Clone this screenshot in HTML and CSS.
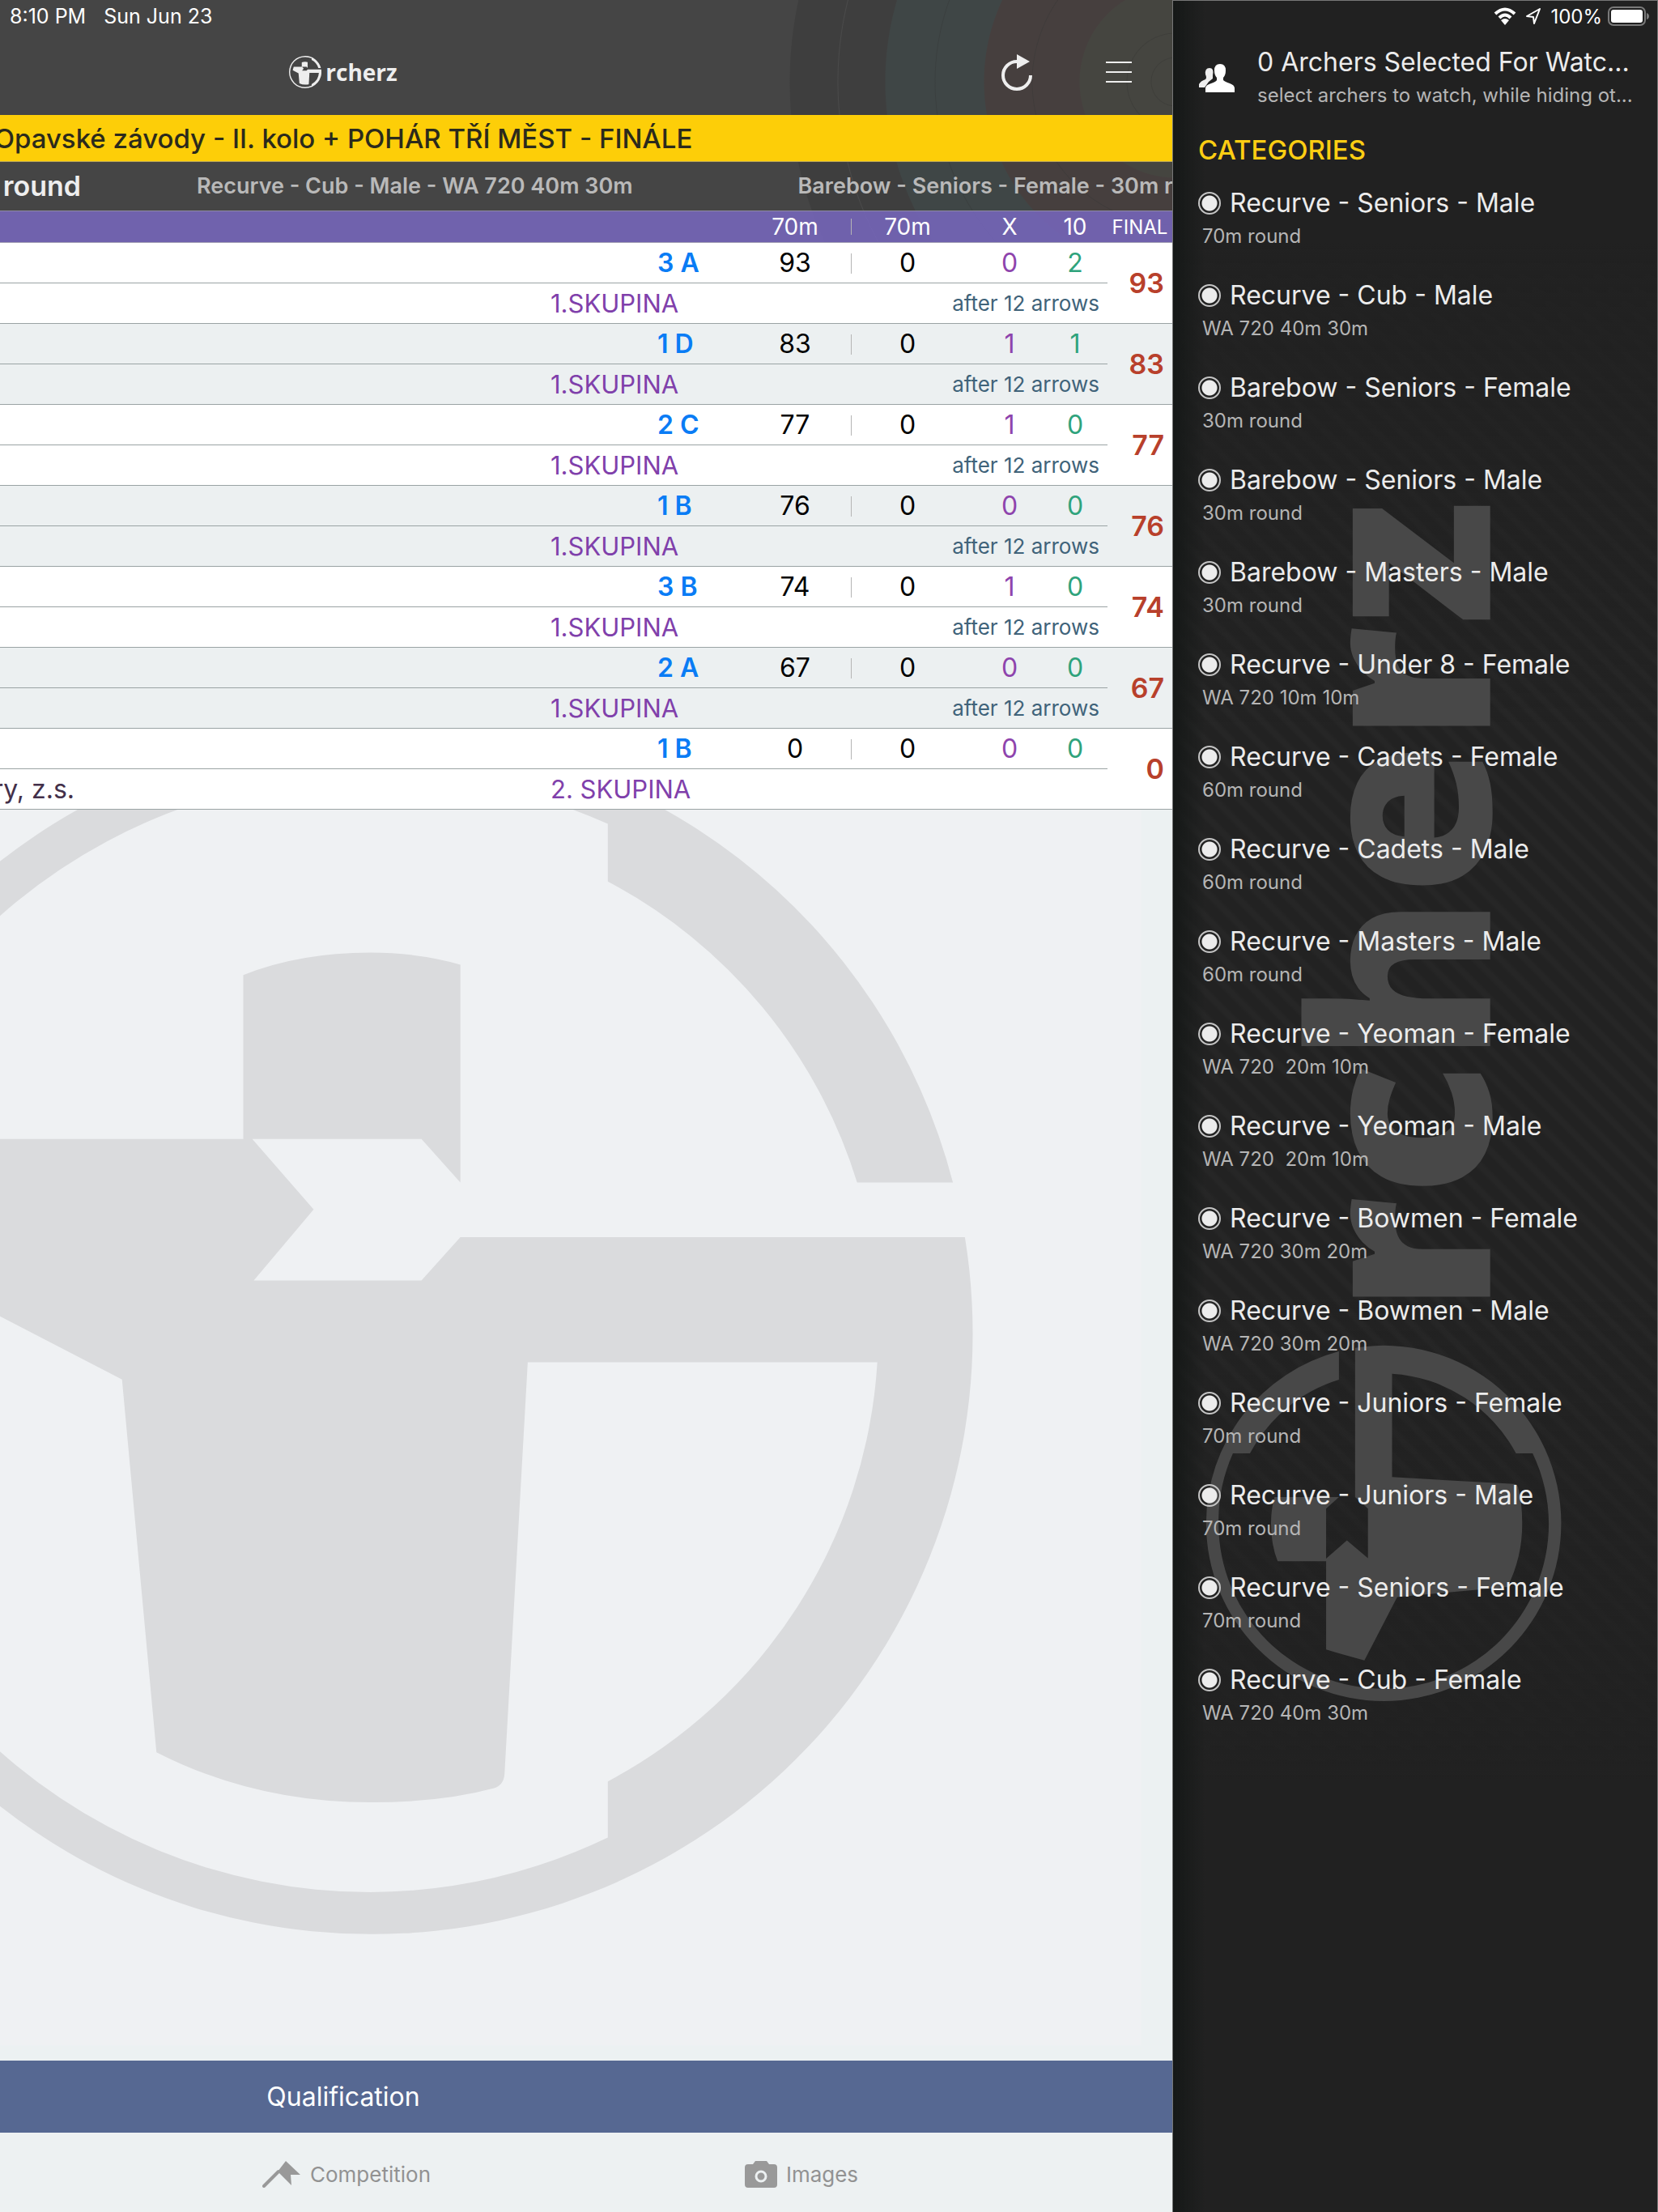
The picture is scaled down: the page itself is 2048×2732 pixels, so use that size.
FILE: index.html
```html
<!DOCTYPE html>
<html lang="en">
<head>
<meta charset="utf-8">
<meta name="viewport" content="width=device-width, initial-scale=1">
<title>rcherz</title>
<link rel="stylesheet" href="styles.css">
</head>
<body>
<svg class="defs" aria-hidden="true">
  <symbol id="mark" viewBox="-307 -80 1604 1604" overflow="visible">
    <path d="M615 593H1289A802 802 0 0 1 495 1524A802 802 0 0 1 -307 722A802 802 0 0 1 495 -80A802 802 0 0 1 1273 520H1145A681 681 0 0 0 812 118V41A746 746 0 0 0 495 -24A746 746 0 0 0 495 1468A746 746 0 0 0 812 1395V1320A681 681 0 0 0 1172 760H705L674 1310Q673 1325 660 1329Q590 1348 495 1348Q340 1348 209 1281L163 783L-123 635Q-98 540 -74 462H325V243Q400 213 495 213Q560 213 615 229V520L563 462H337L419 556L339 651H563Z"/>
  </symbol>
</svg>
<main class="main">
  <div class="screen">
    <header class="top">
      <div class="status"><span>8:10 PM</span><span>Sun Jun 23</span></div>
      <div class="nav">
        <a class="logo" href="#"><svg class="logo-mark" aria-hidden="true"><use href="#mark"/></svg><span>rcherz</span></a>
        <div class="actions">
          <button type="button" aria-label="Refresh"><svg width="40" height="48" viewBox="0 0 40 48"><path d="M36 28A17 17 0 1 1 19 11" fill="none" stroke="#eee" stroke-width="4"/><path d="M19 2L35 11L19 20Z" fill="#eee"/></svg></button>
          <button type="button" aria-label="Menu"><svg width="34" height="28" viewBox="0 0 34 28"><path d="M1 2H33M1 14H33M1 26H33" stroke="#eee" stroke-width="2"/></svg></button>
        </div>
      </div>
      <h1 class="event">Opavské závody - II. kolo + POHÁR TŘÍ MĚST - FINÁLE</h1>
      <nav class="rounds">
        <a class="current" href="#">round</a>
        <a href="#">Recurve - Cub - Male - WA 720 40m 30m</a>
        <a href="#">Barebow - Seniors - Female - 30m round</a>
      </nav>
      <table class="scores">
        <colgroup><col><col class="c-group"><col class="c-target"><col class="c-first"><col class="c-second"><col class="c-x"><col class="c-ten"><col class="c-final"></colgroup>
        <thead>
          <tr><th></th><th></th><th></th><th>70m</th><th class="split">70m</th><th>X</th><th>10</th><th class="final">FINAL</th></tr>
        </thead>
        <tbody>
          <tr><td colspan="2"></td><td class="target">3 A</td><td>93</td><td class="split">0</td><td class="x">0</td><td class="ten">2</td><td class="final" rowspan="2">93</td></tr>
          <tr><td class="club"></td><td class="group" colspan="3">1.SKUPINA</td><td class="after" colspan="3">after 12 arrows</td></tr>
        </tbody>
        <tbody>
          <tr><td colspan="2"></td><td class="target">1 D</td><td>83</td><td class="split">0</td><td class="x">1</td><td class="ten">1</td><td class="final" rowspan="2">83</td></tr>
          <tr><td class="club"></td><td class="group" colspan="3">1.SKUPINA</td><td class="after" colspan="3">after 12 arrows</td></tr>
        </tbody>
        <tbody>
          <tr><td colspan="2"></td><td class="target">2 C</td><td>77</td><td class="split">0</td><td class="x">1</td><td class="ten">0</td><td class="final" rowspan="2">77</td></tr>
          <tr><td class="club"></td><td class="group" colspan="3">1.SKUPINA</td><td class="after" colspan="3">after 12 arrows</td></tr>
        </tbody>
        <tbody>
          <tr><td colspan="2"></td><td class="target">1 B</td><td>76</td><td class="split">0</td><td class="x">0</td><td class="ten">0</td><td class="final" rowspan="2">76</td></tr>
          <tr><td class="club"></td><td class="group" colspan="3">1.SKUPINA</td><td class="after" colspan="3">after 12 arrows</td></tr>
        </tbody>
        <tbody>
          <tr><td colspan="2"></td><td class="target">3 B</td><td>74</td><td class="split">0</td><td class="x">1</td><td class="ten">0</td><td class="final" rowspan="2">74</td></tr>
          <tr><td class="club"></td><td class="group" colspan="3">1.SKUPINA</td><td class="after" colspan="3">after 12 arrows</td></tr>
        </tbody>
        <tbody>
          <tr><td colspan="2"></td><td class="target">2 A</td><td>67</td><td class="split">0</td><td class="x">0</td><td class="ten">0</td><td class="final" rowspan="2">67</td></tr>
          <tr><td class="club"></td><td class="group" colspan="3">1.SKUPINA</td><td class="after" colspan="3">after 12 arrows</td></tr>
        </tbody>
        <tbody>
          <tr><td colspan="2"></td><td class="target">1 B</td><td>0</td><td class="split">0</td><td class="x">0</td><td class="ten">0</td><td class="final" rowspan="2">0</td></tr>
          <tr><td class="club">ry, z.s.</td><td class="group" colspan="3">2. SKUPINA</td><td class="after" colspan="3"></td></tr>
        </tbody>
      </table>
    </header>
    <div class="backdrop">
      <svg viewBox="0 22 1566 1671" preserveAspectRatio="xMinYMin slice" aria-hidden="true">
        <rect x="0" y="22" width="1525" height="1651" fill="#eff1f3"/>
        <use href="#mark" x="-307" y="-80" width="1604" height="1604" fill="#dadbdd"/>
      </svg>
    </div>
    <button type="button" class="phase">Qualification</button>
    <nav class="tabs">
      <a href="#"><svg width="48" height="34" viewBox="0 0 48 34"><path d="M2 32L20 14" stroke="#999" stroke-width="4" stroke-linecap="round"/><path d="M29 1L47 18L35 18L36 31L19 14Z" fill="#999"/></svg>Competition</a>
      <a href="#"><svg width="40" height="34" viewBox="0 0 40 34"><path d="M4 5H10L13 1H27L30 5H36Q40 5 40 9V30Q40 34 36 34H4Q0 34 0 30V9Q0 5 4 5Z" fill="#999"/><circle cx="20" cy="20" r="6" fill="none" stroke="#edf1f2" stroke-width="3"/></svg>Images</a>
    </nav>
  </div>
</main>
<aside class="panel">
  <svg class="watermark" viewBox="0 0 600 1500" aria-hidden="true">
    <g transform="translate(261 1264) rotate(-90)" fill="#484848">
      <use href="#mark" x="-220" y="-220" width="440" height="440"/>
      <text x="261" y="132" font-size="308">rcherz</text>
    </g>
  </svg>
  <div class="device">
    <svg width="28" height="22" viewBox="0 0 28 22"><g fill="none" stroke="#fff" stroke-width="4"><path d="M2 8Q14 -3 26 8"/><path d="M7 13Q14 6 21 13"/></g><path d="M9 16Q14 12 19 16L14 22Z" fill="#fff"/></svg>
    <svg width="20" height="22" viewBox="0 0 20 22"><path d="M18 2L2 11L10 12L11 20Z" fill="none" stroke="#fff" stroke-width="2" stroke-linejoin="round"/></svg>
    <span>100%</span>
    <svg width="52" height="24" viewBox="0 0 52 24"><rect x="1" y="1" width="45" height="22" rx="6" fill="none" stroke="#7a7a7a" stroke-width="2"/><rect x="4" y="4" width="39" height="16" rx="3" fill="#fff"/><path d="M48 8Q51 9 51 12T48 16Z" fill="#7a7a7a"/></svg>
  </div>
  <a class="watch" href="#">
    <svg width="46" height="38" viewBox="0 0 46 38"><path d="M1 30V26Q3 22 9 20Q11 18 9 14Q8 6 14 6Q20 6 18 15Q18 18 18 19L13 23L8 30Z" fill="#eee"/><path d="M27 1Q34 1 34 9Q34 15 31 18V21Q33 23 39 25Q45 27 45 31V36H9V31Q9 27 16 25Q22 23 23 21V18Q20 15 20 9Q20 1 27 1Z" fill="#fff"/></svg>
    <span class="watch-text"><strong>0 Archers Selected For Watc...</strong><small>select archers to watch, while hiding ot...</small></span>
  </a>
  <h2>CATEGORIES</h2>
  <ul>
    <li><label><input type="checkbox" checked>Recurve - Seniors - Male</label><p>70m round</p></li>
    <li><label><input type="checkbox" checked>Recurve - Cub - Male</label><p>WA 720 40m 30m</p></li>
    <li><label><input type="checkbox" checked>Barebow - Seniors - Female</label><p>30m round</p></li>
    <li><label><input type="checkbox" checked>Barebow - Seniors - Male</label><p>30m round</p></li>
    <li><label><input type="checkbox" checked>Barebow - Masters - Male</label><p>30m round</p></li>
    <li><label><input type="checkbox" checked>Recurve - Under 8 - Female</label><p>WA 720 10m 10m</p></li>
    <li><label><input type="checkbox" checked>Recurve - Cadets - Female</label><p>60m round</p></li>
    <li><label><input type="checkbox" checked>Recurve - Cadets - Male</label><p>60m round</p></li>
    <li><label><input type="checkbox" checked>Recurve - Masters - Male</label><p>60m round</p></li>
    <li><label><input type="checkbox" checked>Recurve - Yeoman - Female</label><p>WA 720  20m 10m</p></li>
    <li><label><input type="checkbox" checked>Recurve - Yeoman - Male</label><p>WA 720  20m 10m</p></li>
    <li><label><input type="checkbox" checked>Recurve - Bowmen - Female</label><p>WA 720 30m 20m</p></li>
    <li><label><input type="checkbox" checked>Recurve - Bowmen - Male</label><p>WA 720 30m 20m</p></li>
    <li><label><input type="checkbox" checked>Recurve - Juniors - Female</label><p>70m round</p></li>
    <li><label><input type="checkbox" checked>Recurve - Juniors - Male</label><p>70m round</p></li>
    <li><label><input type="checkbox" checked>Recurve - Seniors - Female</label><p>70m round</p></li>
    <li><label><input type="checkbox" checked>Recurve - Cub - Female</label><p>WA 720 40m 30m</p></li>
  </ul>
</aside>
</body>
</html>
```
FILE: styles.css
```css
* { box-sizing: border-box; }

body {
  --panel: 600px;
  margin: 0;
  display: flex;
  min-height: 100vh;
  font-family: Inter, "Liberation Sans", sans-serif;
  font-size: 32px;
  background: #212121;
}

a { color: inherit; text-decoration: none; }
button { border: 0; padding: 0; background: none; color: inherit; font: inherit; }
svg { display: block; flex: none; }
.defs { position: absolute; width: 0; height: 0; }

/* The score screen slides left to make room for the panel. */
.main { flex: 1; min-width: 0; overflow: hidden; display: flex; }
.screen {
  flex: 1 0 auto;
  width: calc(100% + var(--panel));
  margin-left: calc(0px - var(--panel));
  display: flex;
  flex-direction: column;
  background: #ecf1f2;
}

.top {
  background:
    radial-gradient(circle at calc(100% + 4px) 101px,
      #454540 29px, #3e3e3a 30px, #454540 31px,
      #454540 59px, #3e3e3a 60px, #454540 61px,
      #454540 118px, #463f3e 119px,
      #463f3e 176px, #3f3b3a 177px, #463f3e 178px,
      #463f3e 236px, #3f4646 237px,
      #3f4646 296px, #3a3f3f 297px, #3f4646 298px,
      #3f4646 358px, #3e3e3e 359px,
      #3e3e3e 416px, #4a4a4a 417px, #3e3e3e 418px,
      #3e3e3e 476px, #454545 477px);
}

.status {
  display: flex;
  gap: 22px;
  height: 40px;
  padding-left: calc(var(--panel) + 12px);
  line-height: 40px;
  font-size: 25px;
  color: #fff;
}

.nav {
  display: grid;
  grid-template-columns: 1fr auto 1fr;
  align-items: center;
  height: 102px;
  padding-bottom: 4px;
}
.logo {
  grid-column: 2;
  display: flex;
  align-items: center;
  gap: 5px;
  color: #eee;
  font: 700 28px/40px "Open Sans", sans-serif;
}
.logo-mark { width: 40px; height: 40px; fill: #eee; }
.actions { display: flex; justify-content: flex-end; gap: 61px; padding-right: 34px; }
.actions button { width: 64px; height: 64px; display: grid; place-items: center; }

.event {
  margin: 0;
  height: 58px;
  line-height: 58px;
  border-bottom: 1px solid #b9a65a;
  background: #fdce08;
  color: #2b2a1c;
  text-align: center;
  font-size: 33px;
  font-weight: 500;
}

.rounds {
  display: flex;
  height: 61px;
  line-height: 60px;
  border-bottom: 1px solid #8f8aa5;
  overflow: hidden;
  white-space: nowrap;
  color: #b9b9b9;
  font-size: 27px;
  font-weight: 600;
}
.rounds a { flex: none; margin-right: 204px; }
.rounds .current {
  width: calc(var(--panel) + 100px);
  margin-right: 143px;
  text-align: right;
  font-size: 34px;
  color: #eee;
}

.scores { width: 100%; table-layout: fixed; border-collapse: separate; border-spacing: 0; }
.c-group { width: 132px; }
.c-target { width: 116px; }
.c-first { width: 108px; }
.c-second { width: 170px; }
.c-x { width: 82px; }
.c-ten, .c-final { width: 80px; }
.scores th {
  height: 39px;
  padding: 0;
  border-bottom: 1px solid #a39fb4;
  background: rgba(120, 103, 192, .85);
  color: #fff;
  font-size: 28px;
  font-weight: 400;
}
.scores td {
  height: 50px;
  padding: 0;
  border-bottom: 1px solid #9aa3a4;
  text-align: center;
  white-space: nowrap;
  background: #fff;
}
.scores tbody:nth-of-type(even) td { background: #ecf0f1; }
.scores .split { position: relative; }
.split::before {
  content: "";
  position: absolute;
  left: 15px;
  top: 13px;
  width: 1px;
  height: 25px;
  background: #b5b5b5;
}
th.split::before { top: 9px; height: 20px; }
.scores .target { text-align: left; color: #0a7cf5; font-weight: 600; }
.scores .x { color: #8e44ad; }
.scores .ten { color: #2fa37c; }
.scores .club { text-align: right; padding-right: 588px; color: #43304a; }
.scores .group { text-align: left; color: #8040ab; font-size: 31px; }
.scores .after { text-align: right; padding-right: 10px; color: #40637a; font-size: 26px; }
.scores td.final { text-align: right; padding-right: 10px; color: #b8402b; font-size: 34px; font-weight: 600; }
.scores th.final { font-size: 24px; }

.backdrop { flex: 1; padding-left: var(--panel); min-height: 400px; }
.backdrop svg { width: 100%; height: 100%; }

.phase { height: 89px; background: #566892; color: #fff; }

.tabs {
  display: grid;
  grid-template-columns: repeat(3, 562px);
  justify-content: center;
  height: 98px;
  background: #edf1f2;
  color: #929292;
  font-size: 26px;
}
.tabs a { display: flex; align-items: center; justify-content: center; gap: 11px; padding: 4px 0 0 8px; }
.tabs a:first-child { grid-column: 2; }

.panel {
  position: relative;
  width: var(--panel);
  flex: none;
  border: solid #777;
  border-width: 0 1px;
  padding: 0 31px;
  color: #ececec;
  background:
    linear-gradient(#777, #777) 0 0 / 100% 1px no-repeat,
    linear-gradient(90deg, #151817, rgba(33, 33, 33, 0) 40px),
    linear-gradient(#212121 300px, rgba(33, 33, 33, 0) 900px, rgba(33, 33, 33, 0) 1600px, #212121 2200px),
    repeating-linear-gradient(45deg, #222 0, #222 10px, #262626 14px, #262626 18px, #222 22px);
}
.watermark { position: absolute; left: 0; top: 622px; width: 100%; }
.watermark text { font-family: "Open Sans", sans-serif; font-weight: 800; }
.panel > :not(.watermark) { position: relative; }

.device {
  display: flex;
  align-items: center;
  justify-content: flex-end;
  gap: 11px;
  height: 40px;
  margin-right: -22px;
  font-size: 24px;
  color: #fff;
}
.device span { margin-right: -4px; }

.watch { display: flex; align-items: center; gap: 27px; padding-top: 16px; }
.watch-text { white-space: nowrap; }
.watch strong, .watch small { display: block; font-weight: 400; }
.watch strong { font-size: 32px; line-height: 42px; }
.watch small, .panel p { font-size: 24px; line-height: 40px; color: #b5b5b5; }

.panel h2 {
  margin: 26px 0 24px;
  line-height: 42px;
  font-size: 33px;
  font-weight: 500;
  color: #fdce13;
}
.panel ul { margin: 0; padding: 0; list-style: none; }
.panel li { margin-bottom: 32px; }
.panel label { display: flex; align-items: center; gap: 11px; line-height: 42px; white-space: nowrap; }
.panel p { margin: 0; padding-left: 5px; white-space: pre; }
.panel input {
  appearance: none;
  width: 28px;
  height: 28px;
  margin: 0;
  border: 2px solid #c4c4c4;
  border-radius: 50%;
}
.panel input:checked { background: radial-gradient(circle, #ececec 9px, transparent 10px); }
```
